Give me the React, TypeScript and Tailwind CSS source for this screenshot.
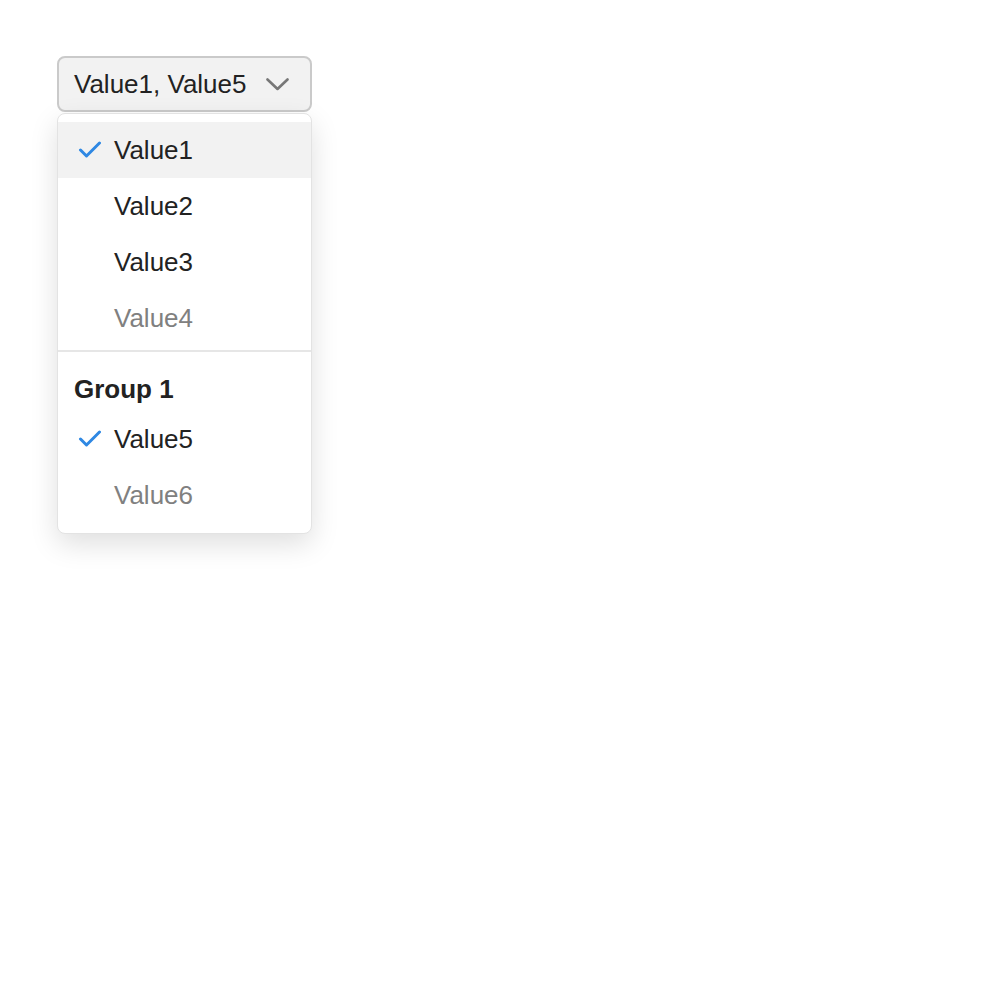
type Option = {
  label: string
  checked?: boolean
  disabled?: boolean
  active?: boolean
}

const TOP_OPTIONS: Option[] = [
  { label: 'Value1', checked: true, active: true },
  { label: 'Value2' },
  { label: 'Value3' },
  { label: 'Value4', disabled: true },
]

const GROUP_OPTIONS: Option[] = [
  { label: 'Value5', checked: true },
  { label: 'Value6', disabled: true },
]

function Check() {
  return (
    <svg width="24" height="18" viewBox="0 0 24 18" fill="none" className="shrink-0">
      <polyline points="2.5,9 8.5,15 21.5,2" stroke="#2f88e3" strokeWidth="3" strokeLinecap="round" strokeLinejoin="round" />
    </svg>
  )
}

function Row({ option }: { option: Option }) {
  return (
    <div className={`flex h-[56px] items-center gap-[12px] pl-[20px] ${option.active ? 'bg-[#f2f2f2]' : ''}`}>
      <span className="flex w-[24px] justify-center">{option.checked && <Check />}</span>
      <span className={option.disabled ? 'text-[#808080]' : 'text-[#222222]'}>{option.label}</span>
    </div>
  )
}

export default function App() {
  return (
    <div className="min-h-screen bg-white pl-[57px] pt-[56px] font-['Liberation_Sans',Arial,sans-serif] text-[26px] leading-[29px]">
      <div className="w-[255px]">
        <button className="flex h-[56px] w-full items-center justify-between rounded-[8px] border-2 border-[#cacaca] bg-[#f2f2f2] pl-[15px] pr-[21px] text-[#222222]">
          <span>Value1, Value5</span>
          <svg width="23" height="13" viewBox="0 0 23 13" fill="none">
            <polyline points="1.5,1.5 11.5,11 21.5,1.5" stroke="#777777" strokeWidth="2.6" strokeLinecap="round" strokeLinejoin="round" />
          </svg>
        </button>

        <div className="mt-[1px] rounded-[8px] border border-[#e3e3e3] bg-white pt-[8px] pb-[10px] shadow-[0_10px_28px_rgba(0,0,0,0.13)]">
          {TOP_OPTIONS.map(o => (
            <Row key={o.label} option={o} />
          ))}
          <div className="mt-[4px] h-[2px] bg-[#e6e6e6]" />
          <div className="pl-[16px] pt-[23px] pb-[7px] font-bold text-[#222222]">Group 1</div>
          {GROUP_OPTIONS.map(o => (
            <Row key={o.label} option={o} />
          ))}
        </div>
      </div>
    </div>
  )
}
